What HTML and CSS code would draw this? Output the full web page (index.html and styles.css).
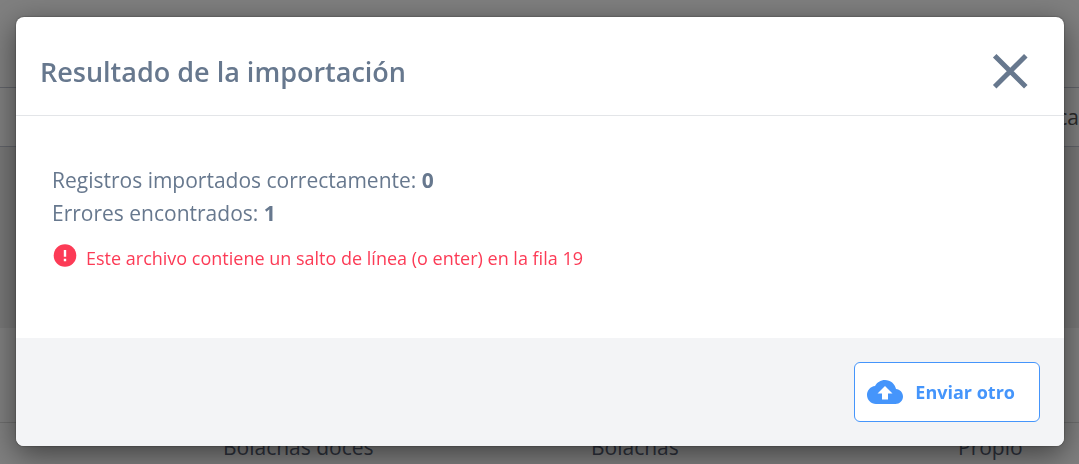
FILE: index.html
```html
<!DOCTYPE html>
<html lang="es">
<head>
<meta charset="utf-8">
<meta name="viewport" content="width=device-width, initial-scale=1">
<title>Resultado de la importación</title>
<link rel="stylesheet" href="styles.css">
</head>
<body>
<div class="page" aria-hidden="true">
  <div class="page-header">ca</div>
  <div class="page-filters"></div>
  <div class="page-spacer"></div>
  <div class="page-row">
    <span>Bolachas doces</span>
    <span>Bolachas</span>
    <span>Propio</span>
  </div>
</div>
<div class="backdrop">
  <section class="modal" role="dialog" aria-modal="true" aria-labelledby="modal-title">
    <header class="modal-header">
      <h1 class="modal-title" id="modal-title">Resultado de la importación</h1>
      <button class="close" type="button" aria-label="Cerrar">
        <svg class="close-icon" viewBox="0 0 36 36" aria-hidden="true"><path d="M2.7 2.7 33.8 33.8M33.8 2.7 2.7 33.8" fill="none" stroke="currentColor" stroke-width="5"/></svg>
      </button>
    </header>
    <div class="modal-body">
      <p class="summary">Registros importados correctamente: <strong>0</strong></p>
      <p class="summary">Errores encontrados: <strong>1</strong></p>
      <p class="error">
        <svg class="error-icon" viewBox="0 0 24 24" aria-hidden="true"><circle cx="12" cy="11.5" r="11.3" fill="currentColor"/><path d="M10.8 6h2.4v6.8h-2.4zM10.8 14.8h2.4v2.4h-2.4z" fill="#fff"/></svg>
        <span>Este archivo contiene un salto de línea (o enter) en la fila 19</span>
      </p>
    </div>
    <footer class="modal-footer">
      <button class="send" type="button">
        <svg class="send-icon" viewBox="0 4 24 16" aria-hidden="true"><path d="M19.35 10.04C18.67 6.59 15.64 4 12 4 9.11 4 6.6 5.64 5.35 8.04 2.34 8.36 0 10.91 0 14c0 3.31 2.69 6 6 6h13c2.76 0 5-2.24 5-5 0-2.64-2.05-4.78-4.65-4.96zM14 13v4h-4v-4H7l5-5 5 5h-3z" fill="currentColor"/></svg>
        <span>Enviar otro</span>
      </button>
    </footer>
  </section>
</div>
</body>
</html>
```
FILE: styles.css
```css
* {
  box-sizing: border-box;
}

body {
  margin: 0;
  overflow: hidden;
  background: #fff;
  color: #67788e;
  font-family: "Open Sans", "Noto Sans", sans-serif;
}

.page {
  height: 100vh;
  overflow: hidden;
  padding-top: 87px;
  color: #5b6478;
  font-size: 21px;
  line-height: 32px;
}

.page-header {
  height: 60px;
  padding-top: 13px;
  border-top: 1px solid #c4c8d4;
  border-bottom: 1px solid #c4c8d4;
  color: #555;
  text-align: right;
}

.page-filters {
  height: 181px;
  background: #f0f0f0;
}

.page-spacer {
  height: 94px;
}

.page-row {
  display: grid;
  grid-template-columns: 368px 367px 1fr;
  padding: 8px 0 8px 223px;
  border-top: 1px solid #dcdcdc;
}

.backdrop {
  position: fixed;
  inset: 0;
  display: flex;
  align-items: flex-start;
  padding: 17px 15px 18px 16px;
  background: rgba(0, 0, 0, 0.5);
}

.modal {
  flex: 1;
  overflow: hidden;
  border-radius: 8px;
  background: #fff;
  box-shadow: 0 0 2px rgba(0, 0, 0, 0.5), 0 8px 30px rgba(0, 0, 0, 0.5);
}

.modal-header {
  display: flex;
  align-items: center;
  justify-content: space-between;
  padding: 30px 36px 18px 24px;
  border-bottom: 1px solid #e3e5e8;
}

.modal-title {
  margin: 0;
  font-size: 27px;
  font-weight: 600;
  line-height: 50px;
}

.close {
  display: flex;
  padding: 0 0 2px;
  border: 0;
  background: none;
  color: inherit;
  cursor: pointer;
}

.close-icon {
  width: 36px;
  height: 36px;
}

.modal-body {
  padding: 48px 36px 60px;
}

.summary {
  margin: 0;
  font-size: 21px;
  line-height: 33px;
}

.error {
  display: flex;
  align-items: center;
  gap: 9px;
  margin: 8px 0 0;
  color: #fc3b56;
  font-size: 18px;
  line-height: 40px;
}

.error-icon {
  width: 24px;
  height: 24px;
  margin: 0 0 4px 1px;
}

.modal-footer {
  display: flex;
  justify-content: flex-end;
  padding: 24px;
  background: #f3f4f6;
}

.send {
  display: flex;
  align-items: center;
  gap: 12px;
  height: 60px;
  padding: 0 24px 0 12px;
  border: 1px solid #4595fb;
  border-radius: 6px;
  background: #fff;
  color: #4595fb;
  font-family: inherit;
  font-size: 18px;
  font-weight: 700;
  cursor: pointer;
}

.send-icon {
  width: 36px;
  height: 24px;
}
```
